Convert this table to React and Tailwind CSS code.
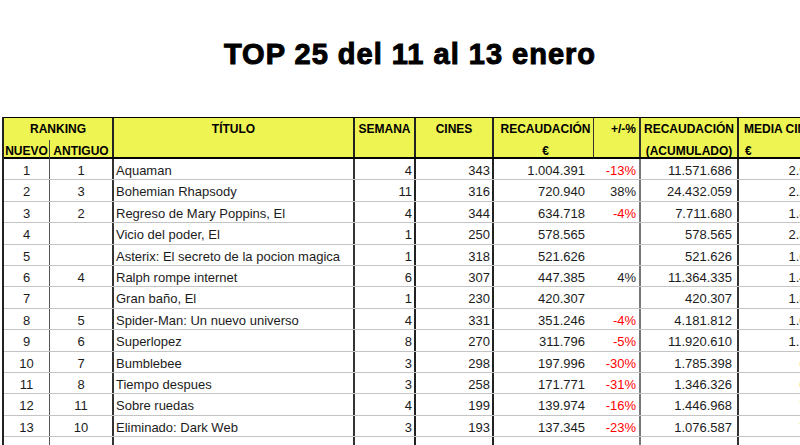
import React from 'react';

const rows = [
  ['1', '1', 'Aquaman', '4', '343', '1.004.391', '-13%', '11.571.686', '2.928'],
  ['2', '3', 'Bohemian Rhapsody', '11', '316', '720.940', '38%', '24.432.059', '2.281'],
  ['3', '2', 'Regreso de Mary Poppins, El', '4', '344', '634.718', '-4%', '7.711.680', '1.845'],
  ['4', '', 'Vicio del poder, El', '1', '250', '578.565', '', '578.565', '2.314'],
  ['5', '', 'Asterix: El secreto de la pocion magica', '1', '318', '521.626', '', '521.626', '1.640'],
  ['6', '4', 'Ralph rompe internet', '6', '307', '447.385', '4%', '11.364.335', '1.457'],
  ['7', '', 'Gran baño, El', '1', '230', '420.307', '', '420.307', '1.827'],
  ['8', '5', 'Spider-Man: Un nuevo universo', '4', '331', '351.246', '-4%', '4.181.812', '1.061'],
  ['9', '6', 'Superlopez', '8', '270', '311.796', '-5%', '11.920.610', '1.155'],
  ['10', '7', 'Bumblebee', '3', '298', '197.996', '-30%', '1.785.398', '664'],
  ['11', '8', 'Tiempo despues', '3', '258', '171.771', '-31%', '1.346.326', '666'],
  ['12', '11', 'Sobre ruedas', '4', '199', '139.974', '-16%', '1.446.968', '703'],
  ['13', '10', 'Eliminado: Dark Web', '3', '193', '137.345', '-23%', '1.076.587', '712'],
  ['', '', '', '', '', '', '', '', ''],
];

const Row = ({ r }) => {
  const neg = r[6].startsWith('-');
  const low = r[8] && !r[8].includes('.');
  return (
    <div className="flex h-[21.4px] border-b border-[#c4c4c4] text-[13px] leading-[24px] text-[#1c1c1c]">
      <div className="w-[46px] shrink-0 border-r border-[#555] text-center">{r[0]}</div>
      <div className="w-[64px] shrink-0 border-r-2 border-[#333] text-center">{r[1]}</div>
      <div className="w-[241px] shrink-0 border-r-2 border-[#333] pl-[2px] whitespace-nowrap">{r[2]}</div>
      <div className="w-[61px] shrink-0 border-r-2 border-[#222] pr-[2px] text-right">{r[3]}</div>
      <div className="w-[78px] shrink-0 border-r-2 border-[#222] pr-[2px] text-right">{r[4]}</div>
      <div className="w-[100px] shrink-0 border-r border-transparent pr-[8px] text-right">{r[5]}</div>
      <div className={`w-[47px] shrink-0 border-r-2 border-[#777] pr-[3px] text-right ${neg ? 'text-[#ff0000]' : ''}`}>{r[6]}</div>
      <div className="w-[98px] shrink-0 border-r-2 border-[#333] pr-[5px] text-right">{r[7]}</div>
      <div className={`w-[100px] shrink-0 pr-[18px] text-right ${low ? 'text-[#e9a23b]' : ''}`}>{r[8]}</div>
    </div>
  );
};

export default function App() {
  return (
    <div className="w-[800px] h-[445px] overflow-hidden bg-white font-['Liberation_Sans',Arial,sans-serif]">
      {/* Title */}
      <div className="h-[117px] flex justify-center pl-[20px] pt-[40px]">
        <h1 className="text-[29px] leading-none font-bold tracking-[1px] text-black [-webkit-text-stroke:1px_#000]">
          TOP 25 del 11 al 13 enero
        </h1>
      </div>

      <div className="ml-[2px] w-[900px] border-l-2 border-[#222]">
        {/* Header */}
        <div className="flex h-[42px] border-t border-b-2 border-black bg-[#eef452] text-[12px] font-bold leading-[22px] text-black">
          <div className="w-[110px] shrink-0 border-r-2 border-[#222] flex flex-col">
            <div className="text-center">RANKING</div>
            <div className="flex flex-1">
              <div className="w-[46px] shrink-0 border-r border-[#444] text-center">NUEVO</div>
              <div className="flex-1 text-center">ANTIGUO</div>
            </div>
          </div>
          <div className="w-[241px] shrink-0 border-r-2 border-[#222] text-center">TÍTULO</div>
          <div className="w-[61px] shrink-0 border-r-2 border-[#222] text-center">SEMANA</div>
          <div className="w-[78px] shrink-0 border-r-2 border-[#222] text-center">CINES</div>
          <div className="w-[100px] shrink-0 border-r border-[#333] text-center pl-[4px]">
            <div>RECAUDACIÓN</div>
            <div>€</div>
          </div>
          <div className="w-[47px] shrink-0 border-r-2 border-[#333] pr-[3px] text-right">+/-%</div>
          <div className="w-[98px] shrink-0 border-r-2 border-[#222] text-center">
            <div>RECAUDACIÓN</div>
            <div>(ACUMULADO)</div>
          </div>
          <div className="w-[100px] shrink-0 pl-[5px] whitespace-nowrap">
            <div>MEDIA CINE</div>
            <div className="pl-[1px]">€</div>
          </div>
        </div>

        {/* Body */}
        {rows.map((r, i) => (
          <Row key={i} r={r} />
        ))}
      </div>
    </div>
  );
}
